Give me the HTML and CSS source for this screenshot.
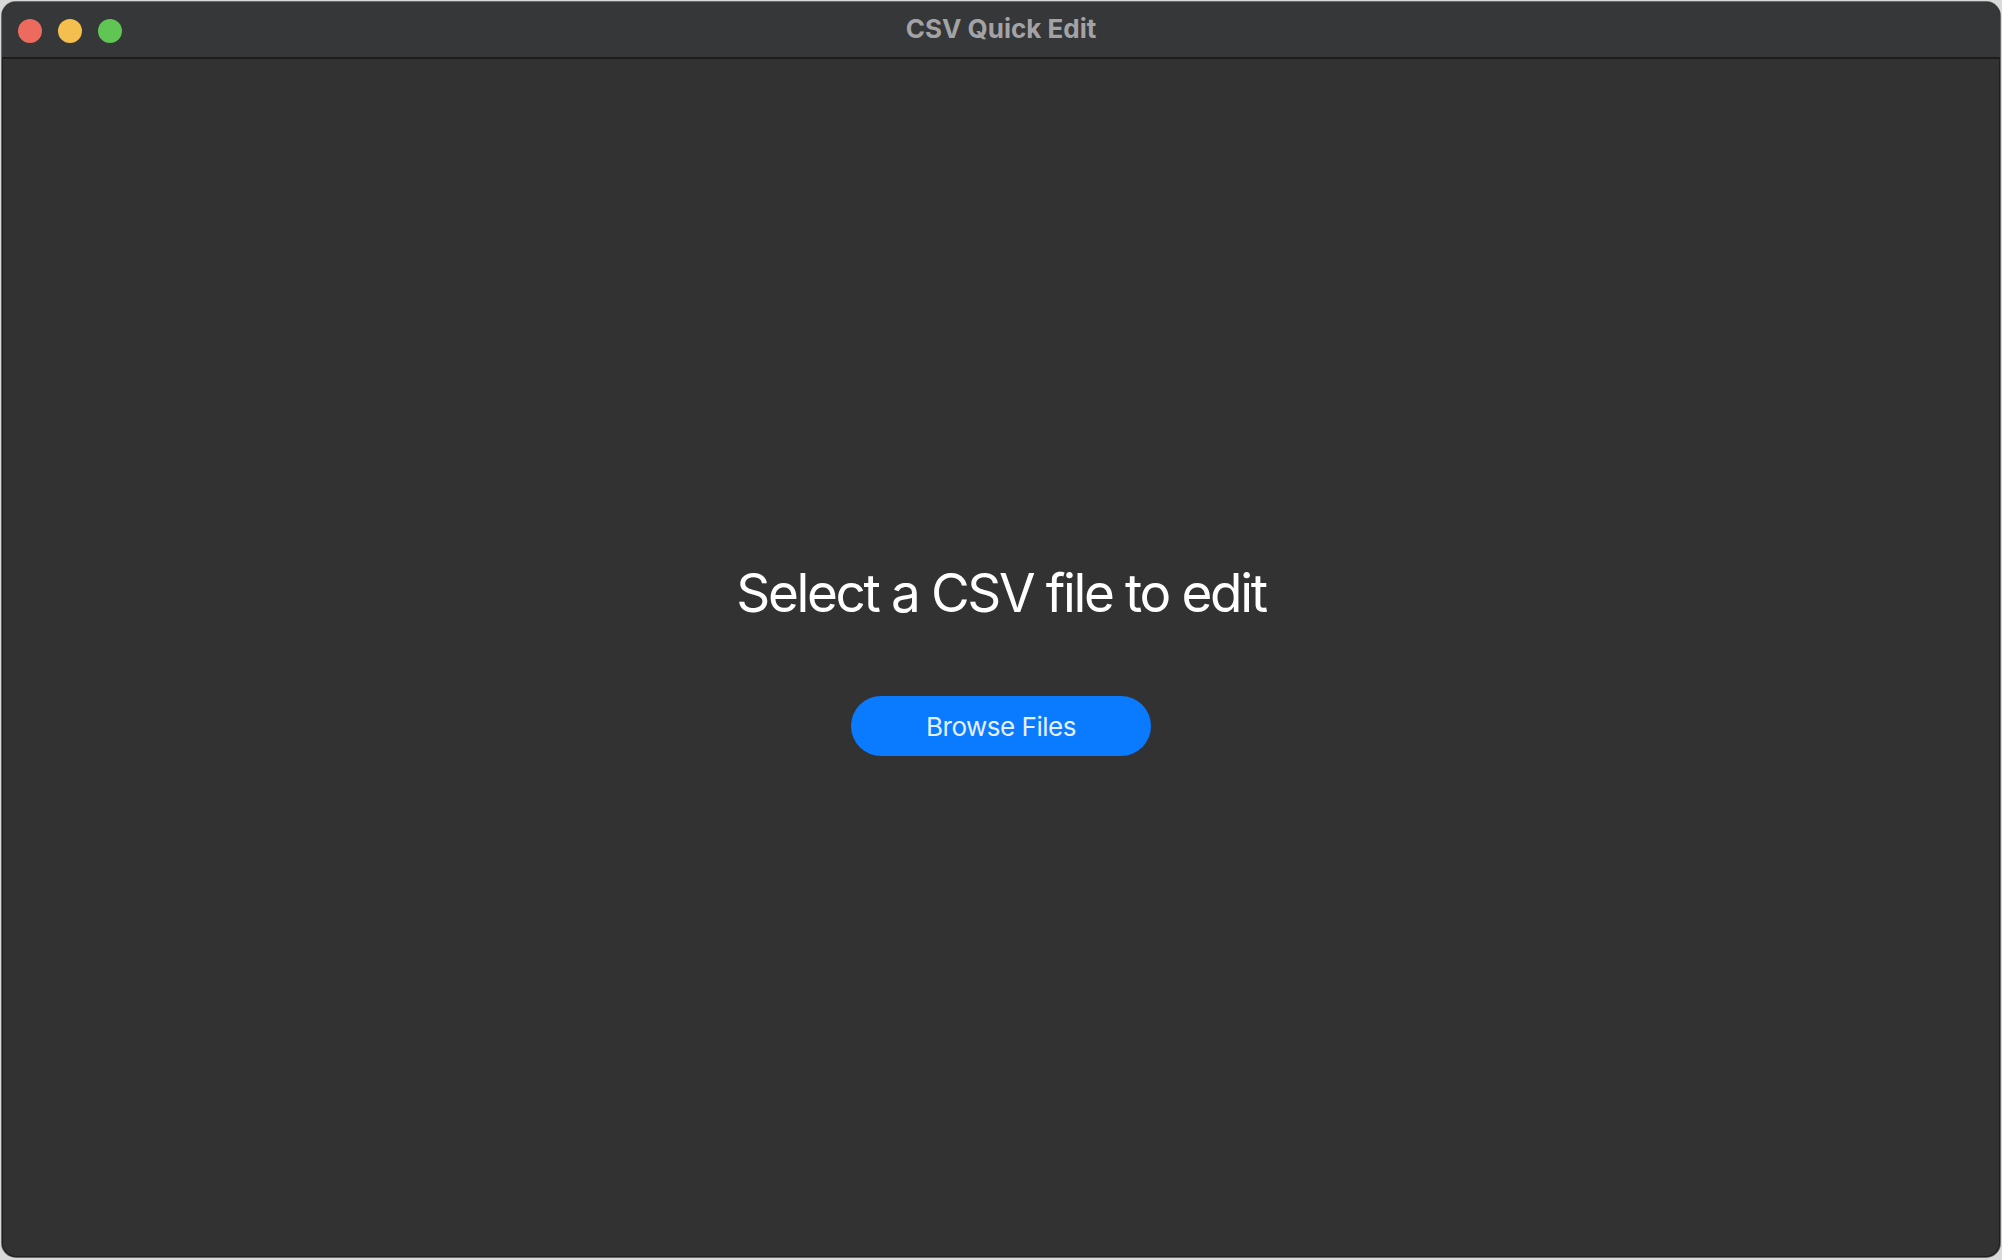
FILE: index.html
```html
<!DOCTYPE html>
<html>
<head>
<meta charset="utf-8">
<link rel="stylesheet" href="styles.css">
</head>
<body>
<div class="window">
  <div class="titlebar">
    <div class="lights">
      <span class="light red"></span>
      <span class="light yellow"></span>
      <span class="light green"></span>
    </div>
    <div class="title">CSV Quick Edit</div>
  </div>
  <div class="content">
    <h1 class="heading">Select a CSV file to edit</h1>
    <button class="browse">Browse Files</button>
  </div>
</div>
</body>
</html>
```
FILE: styles.css
```css
html, body {
  margin: 0;
  padding: 0;
  height: 100%;
}
body {
  background: #d9d9d9;
  font-family: Inter, "Liberation Sans", sans-serif;
  padding: 2px 2px 3px 2px;
  box-sizing: border-box;
}
.window {
  height: 1255px;
  border-radius: 14px;
  background: #323232;
  box-shadow: 0 0 0 1px #6a6a6a, inset 0 0 0 1px #1e1e1e;
  overflow: hidden;
  display: flex;
  flex-direction: column;
}
.titlebar {
  height: 55px;
  background: #363739;
  border-bottom: 2px solid #1c1c1c;
  display: flex;
  align-items: center;
  position: relative;
  flex-shrink: 0;
}
.lights {
  display: flex;
  gap: 16px;
  padding-left: 16px;
  margin-top: 2px;
}
.light {
  width: 24px;
  height: 24px;
  border-radius: 50%;
  display: block;
}
.red { background: #ed6a5e; }
.yellow { background: #f5bf4f; }
.green { background: #61c554; }
.title {
  position: absolute;
  left: 0;
  right: 0;
  top: 0;
  bottom: 0;
  display: flex;
  align-items: center;
  justify-content: center;
  color: #a3a3a5;
  font-weight: 700;
  font-size: 26px;
  padding-bottom: 2px;
  pointer-events: none;
}
.content {
  flex: 1;
  display: flex;
  flex-direction: column;
  align-items: center;
  padding-top: 501px;
}
.heading {
  margin: 0;
  font-weight: 400;
  font-size: 53px;
  line-height: 66px;
  color: #ffffff;
  letter-spacing: -2.35px;
}
.browse {
  margin-top: 70px;
  width: 300px;
  height: 60px;
  border: none;
  border-radius: 30px;
  background: #0a7aff;
  color: #e6efff;
  font-family: Inter, "Liberation Sans", sans-serif;
  font-size: 26px;
  font-weight: 400;
  letter-spacing: -0.5px;
  padding: 0;
}
```
